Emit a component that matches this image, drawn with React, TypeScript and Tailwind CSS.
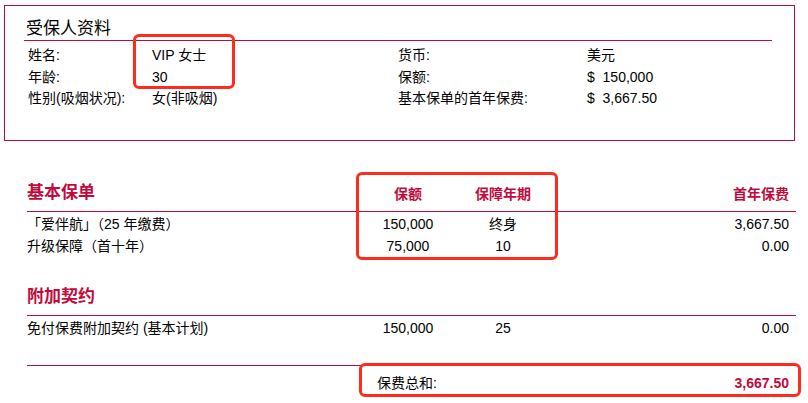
import React from "react";

const font = { fontFamily: '"Liberation Sans", "Noto Sans CJK SC", Arial, sans-serif' };

const insured = [
  ["姓名:", "VIP 女士", "货币:", "美元"],
  ["年龄:", "30", "保额:", "$  150,000"],
  ["性别(吸烟状况):", "女(非吸烟)", "基本保单的首年保费:", "$  3,667.50"],
];

const basicRows = [
  ["「爱伴航」（25 年缴费）", "150,000", "终身", "3,667.50"],
  ["升级保障（首十年）", "75,000", "10", "0.00"],
];

const riderRows = [["免付保费附加契约 (基本计划)", "150,000", "25", "0.00"]];

const cols = "grid grid-cols-[331px_100px_90px_1fr]";

function SectionHead({ title, headers }: { title: string; headers?: boolean }) {
  return (
    <div className={`${cols} items-end h-[29px] pb-[8px] border-b border-[#c10a3c]`}>
      <div className="text-[17px] leading-[20px] font-bold text-[#c10a3c]">{title}</div>
      {headers ? (
        <>
          <div className="text-center text-[14px] leading-[18px] font-bold text-[#c10a3c]">保额</div>
          <div className="text-center text-[14px] leading-[18px] font-bold text-[#c10a3c]">保障年期</div>
          <div className="text-right pr-[7px] text-[14px] leading-[18px] font-bold text-[#c10a3c]">首年保费</div>
        </>
      ) : null}
    </div>
  );
}

function Rows({ rows }: { rows: string[][] }) {
  return (
    <div className="pt-[1px]">
      {rows.map((r) => (
        <div key={r[0]} className={`${cols} text-[14px] leading-[22px] text-black`}>
          <div>{r[0]}</div>
          <div className="text-center">{r[1]}</div>
          <div className="text-center">{r[2]}</div>
          <div className="text-right pr-[7px]">{r[3]}</div>
        </div>
      ))}
    </div>
  );
}

export default function App() {
  return (
    <div className="relative w-[808px] h-[403px] bg-white overflow-hidden" style={font}>
      {/* 受保人资料 */}
      <div className="ml-[4px] mt-[5px] w-[791px] h-[136px] border border-[#c10a3c] pl-[19px] pr-[22px] pt-[12px]">
        <div className="h-[23px] border-b border-[#c10a3c] pl-[2px] text-[17px] leading-[22px] text-black">
          受保人资料
        </div>
        <div className="mt-[4px] pl-[4px]">
          {insured.map((r) => (
            <div key={r[0]} className="grid grid-cols-[124px_246px_189px_1fr] text-[14px] leading-[21.5px] text-black">
              <div>{r[0]}</div>
              <div>{r[1]}</div>
              <div>{r[2]}</div>
              <div className="whitespace-pre">{r[3]}</div>
            </div>
          ))}
        </div>
      </div>

      <div className="ml-[27px] w-[769px] mt-[42px]">
        <SectionHead title="基本保单" headers />
        <Rows rows={basicRows} />

        <div className="mt-[30px]">
          <SectionHead title="附加契约" />
        </div>
        <Rows rows={riderRows} />

        <div className="mt-[26px] border-t border-[#c10a3c]" />
        <div className={`${cols} mt-[6px] text-[14px] leading-[22px]`}>
          <div />
          <div className="col-span-2 pl-[19px] text-black">保费总和:</div>
          <div className="text-right pr-[7px] font-bold text-[#c10a3c]">3,667.50</div>
        </div>
      </div>

      {/* highlight marks */}
      <div className="absolute left-[133px] top-[34px] w-[102px] h-[55px] border-[3px] border-[#ff2b1c] rounded-[6px]" />
      <div className="absolute left-[356px] top-[172px] w-[202px] h-[88px] border-[3px] border-[#ff2b1c] rounded-[6px]" />
      <div className="absolute left-[359px] top-[363px] w-[442px] h-[34px] border-[3px] border-[#ff2b1c] rounded-[6px]" />
    </div>
  );
}
